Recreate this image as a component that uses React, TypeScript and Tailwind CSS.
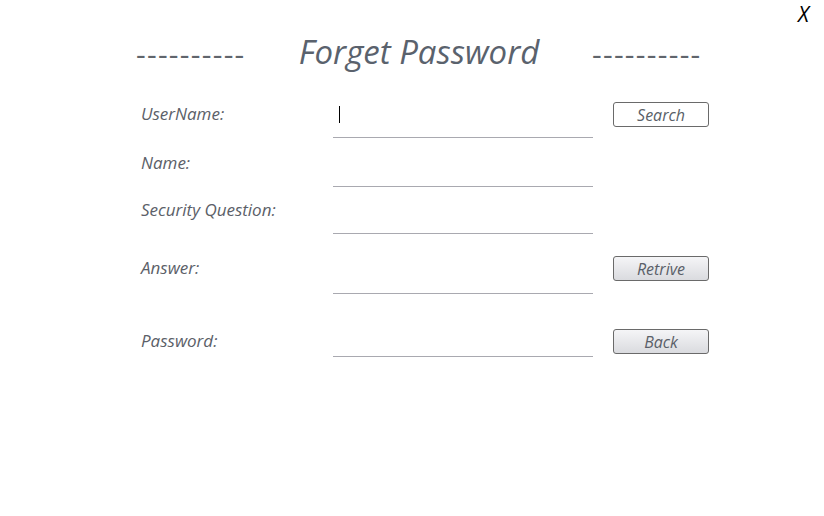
import React from 'react';

const font = { fontFamily: '"Open Sans", sans-serif' };

type Row = {
  label: string;
  height: string;
  labelTop: string;
  button?: { text: string; plain?: boolean; top: string };
  cursor?: boolean;
};

const rows: Row[] = [
  { label: 'UserName:', height: 'h-[41px]', labelTop: 'mt-[6px]', button: { text: 'Search', plain: true, top: 'mt-[5px]' }, cursor: true },
  { label: 'Name:', height: 'h-[49px]', labelTop: 'mt-[14px]' },
  { label: 'Security Question:', height: 'h-[47px]', labelTop: 'mt-[12px]' },
  { label: 'Answer:', height: 'h-[60px]', labelTop: 'mt-[23px]', button: { text: 'Retrive', top: 'mt-[22px]' } },
  { label: 'Password:', height: 'h-[63px]', labelTop: 'mt-[36px]', button: { text: 'Back', top: 'mt-[35px]' } },
];

function FormButton({ text, plain }: { text: string; plain?: boolean }) {
  return (
    <button
      className={`w-[96px] h-[25px] rounded-[3px] border border-[#6a6a6a] text-[16px] italic text-[#5a5f68] leading-none ${
        plain ? 'bg-white' : 'bg-gradient-to-b from-[#f5f5f7] to-[#dadbdf]'
      }`}
      style={font}
    >
      {text}
    </button>
  );
}

export default function App() {
  return (
    <div className="relative w-[824px] h-[516px] bg-white overflow-hidden" style={font}>
      {/* close */}
      <span className="absolute top-0 right-[15px] text-[21px] italic text-black leading-none pt-[4px]">
        X
      </span>

      {/* header */}
      <div className="flex items-center h-[97px] pt-[5px] text-[#60656c]">
        <span className="w-[110px] ml-[136px] pt-[6px] text-[30px] leading-none tracking-[1.3px]">----------</span>
        <h1 className="ml-[44px] w-[258px] text-center text-[33px] italic leading-none text-[#5a626d]">Forget Password</h1>
        <span className="ml-[44px] w-[110px] pt-[6px] text-[30px] leading-none tracking-[1.3px]">----------</span>
      </div>

      {/* form */}
      <div className="flex flex-col pl-[141px]">
        {rows.map((row) => (
          <div key={row.label} className="flex items-start">
            <label className={`w-[192px] text-[17px] italic text-[#5b6068] leading-[22px] ${row.labelTop}`}>{row.label}</label>
            <div className={`relative w-[260px] border-b border-[#a9a9b0] ${row.height}`}>
              {row.cursor && <div className="absolute left-[6px] top-[9px] w-[1px] h-[17px] bg-black" />}
            </div>
            {row.button && (
              <div className={`ml-[20px] ${row.button.top}`}>
                <FormButton text={row.button.text} plain={row.button.plain} />
              </div>
            )}
          </div>
        ))}
      </div>
    </div>
  );
}
